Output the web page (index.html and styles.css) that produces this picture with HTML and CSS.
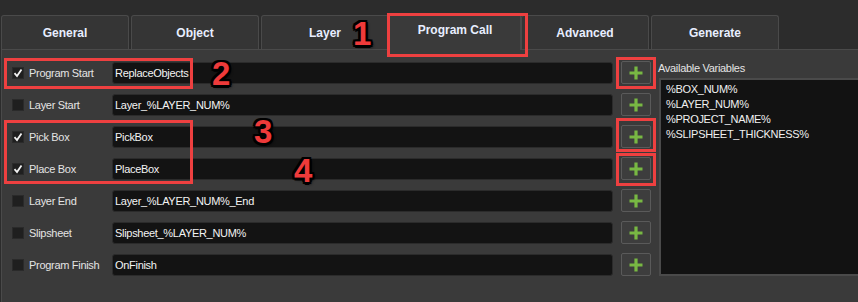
FILE: index.html
```html
<!DOCTYPE html>
<html lang="en">
<head>
    <meta charset="UTF-8">
    <link rel="stylesheet" href="styles.css">
    <title>Program Call</title>
</head>
<body>
    <div class="window">
        <ul class="tabs">
            <li class="tab">General</li>
            <li class="tab">Object</li>
            <li class="tab">Layer</li>
            <li class="tab selected">Program Call</li>
            <li class="tab">Advanced</li>
            <li class="tab">Generate</li>
        </ul>

        <div class="panel">
            <div class="rows">
                <div class="row">
                    <span class="check on"><svg viewBox="0 0 12 12"><path d="M2.5 6.2 L5 9 L9.5 2.5"/></svg></span>
                    <span class="label">Program Start</span>
                    <div class="field">ReplaceObjects</div>
                    <button class="add"><svg viewBox="0 0 16 16"><path d="M8 1.5 V14.5 M1.5 8 H14.5"/></svg></button>
                </div>
                <div class="row">
                    <span class="check"></span>
                    <span class="label">Layer Start</span>
                    <div class="field">Layer_%LAYER_NUM%</div>
                    <button class="add"><svg viewBox="0 0 16 16"><path d="M8 1.5 V14.5 M1.5 8 H14.5"/></svg></button>
                </div>
                <div class="row">
                    <span class="check on"><svg viewBox="0 0 12 12"><path d="M2.5 6.2 L5 9 L9.5 2.5"/></svg></span>
                    <span class="label">Pick Box</span>
                    <div class="field">PickBox</div>
                    <button class="add"><svg viewBox="0 0 16 16"><path d="M8 1.5 V14.5 M1.5 8 H14.5"/></svg></button>
                </div>
                <div class="row">
                    <span class="check on"><svg viewBox="0 0 12 12"><path d="M2.5 6.2 L5 9 L9.5 2.5"/></svg></span>
                    <span class="label">Place Box</span>
                    <div class="field">PlaceBox</div>
                    <button class="add"><svg viewBox="0 0 16 16"><path d="M8 1.5 V14.5 M1.5 8 H14.5"/></svg></button>
                </div>
                <div class="row">
                    <span class="check"></span>
                    <span class="label">Layer End</span>
                    <div class="field">Layer_%LAYER_NUM%_End</div>
                    <button class="add"><svg viewBox="0 0 16 16"><path d="M8 1.5 V14.5 M1.5 8 H14.5"/></svg></button>
                </div>
                <div class="row">
                    <span class="check"></span>
                    <span class="label">Slipsheet</span>
                    <div class="field">Slipsheet_%LAYER_NUM%</div>
                    <button class="add"><svg viewBox="0 0 16 16"><path d="M8 1.5 V14.5 M1.5 8 H14.5"/></svg></button>
                </div>
                <div class="row">
                    <span class="check"></span>
                    <span class="label">Program Finish</span>
                    <div class="field">OnFinish</div>
                    <button class="add"><svg viewBox="0 0 16 16"><path d="M8 1.5 V14.5 M1.5 8 H14.5"/></svg></button>
                </div>
            </div>

            <div class="vars">
                <div class="vars-title">Available Variables</div>
                <div class="vars-list">
                    <div>%BOX_NUM%</div>
                    <div>%LAYER_NUM%</div>
                    <div>%PROJECT_NAME%</div>
                    <div>%SLIPSHEET_THICKNESS%</div>
                </div>
            </div>
        </div>

        <!-- annotation marks -->
        <div class="mark box-tab"></div>
        <div class="mark box-start"></div>
        <div class="mark box-pick"></div>
        <div class="mark box-add1"></div>
        <div class="mark box-add3"></div>
        <div class="mark box-add4"></div>
        <span class="num n1">1</span>
        <span class="num n2">2</span>
        <span class="num n3">3</span>
        <span class="num n4">4</span>
    </div>
</body>
</html>
```

FILE: styles.css
```css
body {
    margin: 0;
    padding: 0;
    background-color: #2c2c2c;
    font-family: 'Liberation Sans', Arial, sans-serif;
    font-size: 11px;
    color: #e2e2e2;
}

.window {
    position: relative;
    width: 858px;
    height: 302px;
    overflow: hidden;
}

/* tab bar */
.tabs {
    display: flex;
    gap: 2px;
    margin: 0;
    padding: 15px 0 0 1px;
    list-style: none;
    height: 49px;
    box-sizing: border-box;
    align-items: flex-end;
}

.tab {
    width: 128px;
    height: 34px;
    box-sizing: border-box;
    background-color: #353535;
    border: 1px solid #4a4a4a;
    border-bottom: none;
    border-radius: 3px 3px 0 0;
    color: #e8eeff;
    font-weight: bold;
    font-size: 12px;
    display: flex;
    align-items: center;
    justify-content: center;
    padding-top: 1px;
}

.tab.selected {
    width: 132px;
    height: 37px;
    margin: 0 -2px -1px;
    background-color: #3a3a3a;
    position: relative;
    z-index: 1;
    padding-top: 0;
    padding-bottom: 5px;
}

/* panel */
.panel {
    display: flex;
    gap: 7px;
    margin-left: 1px;
    height: 253px;
    box-sizing: border-box;
    background-color: #3a3a3a;
    border-top: 1px solid #4a4a4a;
    border-left: 1px solid #4a4a4a;
    padding: 11px 0 0 10px;
}

.rows {
    display: flex;
    flex-direction: column;
    gap: 9px;
}

.row {
    display: flex;
    align-items: center;
    height: 23px;
}

.check {
    width: 12px;
    height: 12px;
    box-sizing: border-box;
    background-color: #1f1f1f;
    border: 1px solid #2a2a2a;
    display: flex;
}

.check svg {
    width: 12px;
    height: 12px;
    margin: -1px;
    fill: none;
    stroke: #f2f2f2;
    stroke-width: 1.8;
}

.label {
    width: 83px;
    margin-left: 5px;
    letter-spacing: -0.3px;
    color: #e4e4e4;
}

.field {
    width: 501px;
    height: 22px;
    box-sizing: border-box;
    background-color: #131313;
    border: 1px solid #2b2b2b;
    border-radius: 3px;
    padding: 0 2px;
    line-height: 20px;
    color: #f4f4f4;
    letter-spacing: -0.3px;
}

.add {
    width: 30px;
    height: 23px;
    margin-left: 8px;
    padding: 0;
    background-color: #3d3d3d;
    border: 1px solid #5a5a5a;
    border-radius: 2px;
    display: flex;
    align-items: center;
    justify-content: center;
}

.add svg {
    width: 16px;
    height: 16px;
    fill: none;
    stroke: #78b843;
    stroke-width: 3.2;
}

/* variables list */
.vars {
    display: flex;
    flex-direction: column;
    flex: 1;
}

.vars-title {
    height: 15px;
    line-height: 15px;
    letter-spacing: -0.3px;
    color: #e4e4e4;
}

.vars-list {
    margin-top: 2px;
    margin-left: 1px;
    height: 198px;
    box-sizing: border-box;
    background-color: #121212;
    border: 2px solid #4a4a4a;
    border-right: none;
    padding: 2px 5px;
    line-height: 15px;
    color: #f0f0f0;
    letter-spacing: -0.3px;
}

/* annotations drawn over the screenshot */
.mark {
    position: absolute;
    box-sizing: border-box;
    border: 3px solid #ee4040;
    z-index: 5;
}

.box-tab   { left: 387px; top: 13px;  width: 141px; height: 44px; }
.box-start { left: 4px;   top: 58px;  width: 189px; height: 31px; }
.box-pick  { left: 4px;   top: 120px; width: 189px; height: 64px; }
.box-add1  { left: 616px; top: 57px;  width: 40px;  height: 32px; }
.box-add3  { left: 616px; top: 118px; width: 40px;  height: 34px; }
.box-add4  { left: 616px; top: 153px; width: 40px;  height: 33px; }

.num {
    position: absolute;
    z-index: 6;
    font-family: 'Liberation Sans', Arial, sans-serif;
    font-weight: bold;
    font-size: 33px;
    line-height: 33px;
    color: #ee3a3a;
    text-shadow: 2.5px 0 0 #000, -2.5px 0 0 #000, 0 2.5px 0 #000, 0 -2.5px 0 #000,
                 2px 2px 0 #000, -2px 2px 0 #000, 2px -2px 0 #000, -2px -2px 0 #000,
                 2px 2px 3px #000;
}

.n1 { left: 353px; top: 17px; }
.n2 { left: 212px; top: 57px; }
.n3 { left: 254px; top: 115px; }
.n4 { left: 294px; top: 154px; }
```
